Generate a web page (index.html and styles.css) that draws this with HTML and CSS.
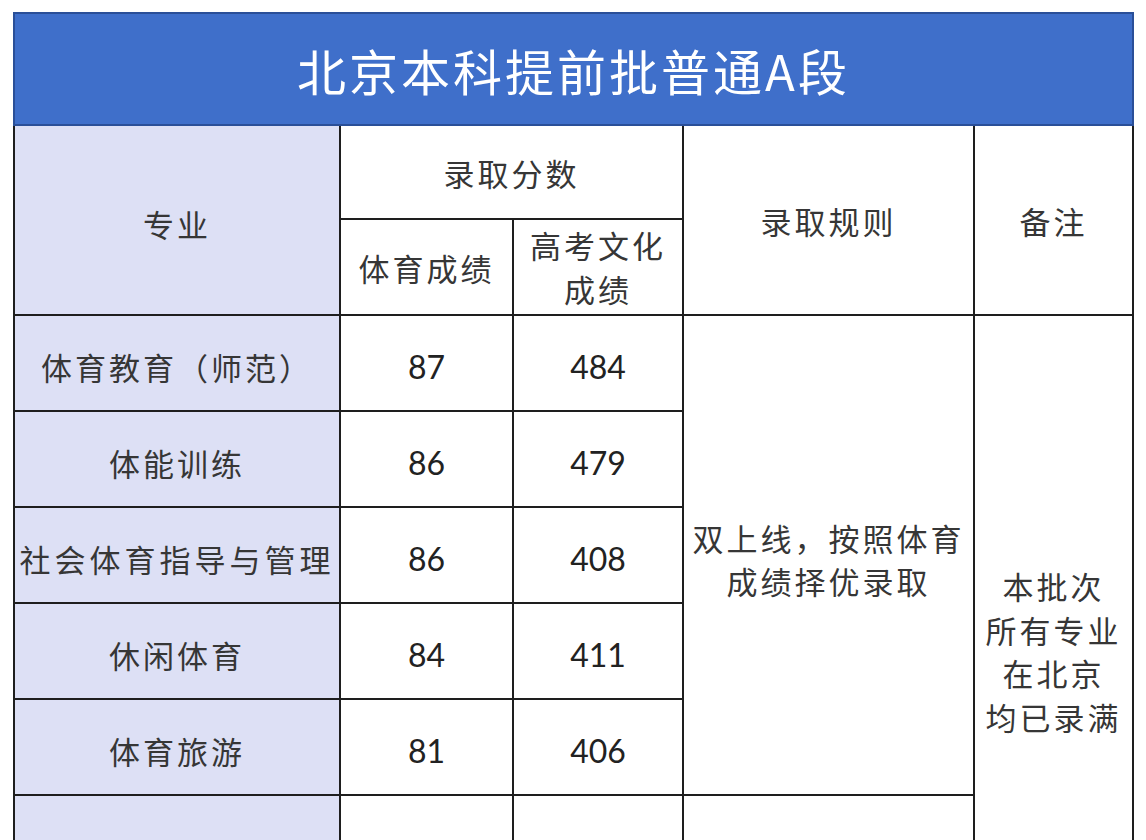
FILE: index.html
```html
<!DOCTYPE html>
<html lang="zh-CN">
<head>
<meta charset="utf-8">
<title>北京本科提前批普通A段</title>
<link rel="stylesheet" href="styles.css">
</head>
<body>
<div class="page">
<table class="score">
  <colgroup>
    <col class="c-major">
    <col class="c-sport">
    <col class="c-exam">
    <col class="c-rule">
    <col class="c-note">
  </colgroup>
  <thead>
    <tr class="r-title"><th colspan="5" class="title">北京本科提前批普通A段</th></tr>
    <tr class="r-h1">
      <th rowspan="2" class="major">专业</th>
      <th colspan="2">录取分数</th>
      <th rowspan="2">录取规则</th>
      <th rowspan="2">备注</th>
    </tr>
    <tr class="r-h2">
      <th>体育成绩</th>
      <th class="two">高考文化<br>成绩</th>
    </tr>
  </thead>
  <tbody>
    <tr class="r-data">
      <td class="major">体育教育（师范）</td>
      <td class="num">87</td>
      <td class="num">484</td>
      <td rowspan="5" class="rule">双上线，按照体育<br>成绩择优录取</td>
      <td rowspan="7" class="note">本批次<br>所有专业<br>在北京<br>均已录满</td>
    </tr>
    <tr class="r-data">
      <td class="major">体能训练</td>
      <td class="num">86</td>
      <td class="num">479</td>
    </tr>
    <tr class="r-data">
      <td class="major wide">社会体育指导与管理</td>
      <td class="num">86</td>
      <td class="num">408</td>
    </tr>
    <tr class="r-data">
      <td class="major">休闲体育</td>
      <td class="num">84</td>
      <td class="num">411</td>
    </tr>
    <tr class="r-data">
      <td class="major">体育旅游</td>
      <td class="num">81</td>
      <td class="num">406</td>
    </tr>
    <tr class="r-data">
      <td class="major"></td>
      <td class="num"></td>
      <td class="num"></td>
      <td></td>
    </tr>
    <tr class="r-data">
      <td class="major"></td>
      <td class="num"></td>
      <td class="num"></td>
      <td></td>
    </tr>
  </tbody>
</table>
</div>
</body>
</html>
```

FILE: styles.css
```css
html, body {
  margin: 0;
  padding: 0;
  background: #ffffff;
}

.page {
  padding: 12px 0 0 13px;
  height: 840px;
  box-sizing: border-box;
  overflow: hidden;
}

.score {
  border-collapse: collapse;
  table-layout: fixed;
  width: 1119px;
  font-family: "Noto Sans CJK SC", "Noto Sans", sans-serif;
  color: #363636;
}

.c-major { width: 326px; }
.c-sport { width: 173px; }
.c-exam { width: 170px; }
.c-rule { width: 291px; }
.c-note { width: 159px; }

.score th,
.score td {
  border: 2px solid #1e1e1e;
  padding: 0;
  text-align: center;
  vertical-align: middle;
  font-weight: 400;
  font-size: 31px;
  letter-spacing: 3px;
  line-height: 43px;
}

.r-title { height: 112px; }
.r-h1 { height: 94px; }
.r-h2 { height: 96px; }
.r-data { height: 96px; }

.score th.title {
  background: #3f6fca;
  color: #ffffff;
  font-size: 49px;
  letter-spacing: 3px;
  line-height: 60px;
  padding-top: 2px;
  border-color: #2a4f98;
}

.score .major {
  background: #dde0f5;
  padding-top: 6px;
}

.score .wide {
  letter-spacing: 4px;
  white-space: nowrap;
}

.score .num {
  font-family: Lato, "Liberation Sans", sans-serif;
  font-size: 32px;
  letter-spacing: 0;
  color: #222222;
  padding-top: 6px;
}

.score .rule {
  padding-top: 8px;
}

.score .note {
  line-height: 43.5px;
}

.score .two {
  line-height: 44px;
}
```
